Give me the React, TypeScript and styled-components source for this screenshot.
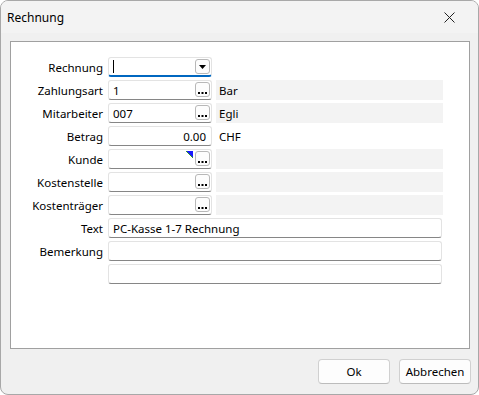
import { createGlobalStyle } from "styled-components";
import styled from "styled-components";

const GlobalStyle = createGlobalStyle`
  html, body {
    margin: 0;
    padding: 0;
    background: #ffffff;
  }
  body {
    font-family: "Noto Sans", "Open Sans", sans-serif;
    font-size: 11.5px;
    color: #000;
  }
`;

const Window = styled.div`
  box-sizing: border-box;
  width: 479px;
  height: 395px;
  border: 1px solid #a8a8a8;
  border-radius: 8px;
  background: #f0f0f0;
  display: flex;
  flex-direction: column;
  overflow: hidden;
`;

const TitleBar = styled.div`
  height: 32px;
  flex-shrink: 0;
  background: #f3f3f3;
  display: flex;
  align-items: center;
  justify-content: space-between;
  padding: 0 23px 0 6px;
  font-size: 12px;
`;

const CloseIcon = styled.svg`
  width: 11px;
  height: 11px;
`;

const Panel = styled.div`
  box-sizing: border-box;
  margin: 8px 8px 0 9px;
  height: 308px;
  background: #fff;
  border: 1px solid #a0a0a0;
  padding-top: 15px;
  display: flex;
  flex-direction: column;
  gap: 3px;
`;

const Row = styled.div`
  display: flex;
  align-items: center;
  height: 20px;
`;

const Label = styled.div`
  width: 92px;
  margin-right: 5px;
  text-align: right;
  white-space: nowrap;
`;

const Input = styled.div<{ $width: number; $focused?: boolean; $align?: string }>`
  box-sizing: border-box;
  position: relative;
  width: ${(p) => p.$width}px;
  height: 20px;
  border: 1px solid #e3e3e3;
  border-bottom: ${(p) => (p.$focused ? "2px solid #0067c0" : "1px solid #868686")};
  border-radius: 3px;
  background: #fff;
  display: flex;
  align-items: center;
  justify-content: ${(p) => (p.$align === "right" ? "flex-end" : "flex-start")};
  padding: 0 4px;
  white-space: nowrap;
`;

const FieldText = styled.span<{ $pad?: number }>`
  padding-right: ${(p) => p.$pad || 0}px;
`;

const Caret = styled.span`
  display: inline-block;
  width: 1px;
  height: 13px;
  background: #000;
`;

const SideButton = styled.div`
  box-sizing: border-box;
  position: absolute;
  right: 1px;
  top: 1px;
  width: 15px;
  height: 15px;
  border: 1px solid #b8b8b8;
  border-radius: 3px;
  background: #fdfdfd;
  display: flex;
  align-items: center;
  justify-content: center;
`;

const Info = styled.div<{ $shaded?: boolean }>`
  box-sizing: border-box;
  margin-left: 4px;
  width: 227px;
  height: 20px;
  background: ${(p) => (p.$shaded ? "#f3f3f3" : "transparent")};
  display: flex;
  align-items: center;
  padding-left: 3px;
`;

const Marker = styled.svg`
  position: absolute;
  right: 18px;
  top: 1px;
  width: 7px;
  height: 7px;
`;

const Footer = styled.div`
  flex: 1;
  display: flex;
  justify-content: flex-end;
  align-items: center;
  gap: 9px;
  padding-right: 7px;
`;

const Button = styled.button`
  box-sizing: border-box;
  width: 72px;
  height: 25px;
  border: 1px solid #d0d0d0;
  border-bottom-color: #bcbcbc;
  border-radius: 4px;
  background: #fdfdfd;
  font-family: inherit;
  font-size: 11.5px;
  color: #000;
  padding: 0;
`;

const Dots = () => (
  <svg width="11" height="11" viewBox="0 0 11 11">
    <rect x="1" y="8" width="2" height="2" fill="#000" />
    <rect x="4.5" y="8" width="2" height="2" fill="#000" />
    <rect x="8" y="8" width="2" height="2" fill="#000" />
  </svg>
);

const Arrow = () => (
  <svg width="9" height="6" viewBox="0 0 9 6">
    <path d="M1 1 L8 1 L4.5 5 Z" fill="#000" />
  </svg>
);

interface Lookup {
  label: string;
  value: string;
  info?: string;
  shaded?: boolean;
  marker?: boolean;
}

const lookups: Lookup[] = [
  { label: "Zahlungsart", value: "1", info: "Bar", shaded: true },
  { label: "Mitarbeiter", value: "007", info: "Egli", shaded: true },
];

const lower: Lookup[] = [
  { label: "Kunde", value: "", shaded: true, marker: true },
  { label: "Kostenstelle", value: "", shaded: true },
  { label: "Kostenträger", value: "", shaded: true },
];

function LookupRow({ item }: { item: Lookup }) {
  return (
    <Row>
      <Label>{item.label}</Label>
      <Input $width={104}>
        <FieldText>{item.value}</FieldText>
        {item.marker && (
          <Marker viewBox="0 0 7 7">
            <path d="M0 0 L7 0 L7 7 Z" fill="#1a1aff" />
            <path d="M0 0 L7 7" stroke="#2c9a2c" strokeWidth="1" />
          </Marker>
        )}
        <SideButton>
          <Dots />
        </SideButton>
      </Input>
      <Info $shaded={item.shaded}>{item.info}</Info>
    </Row>
  );
}

function App() {
  return (
    <>
      <GlobalStyle />
      <Window>
        <TitleBar>
          <span>Rechnung</span>
          <CloseIcon viewBox="0 0 11 11">
            <path d="M0.5 0.5 L10.5 10.5 M10.5 0.5 L0.5 10.5" stroke="#222" strokeWidth="1" />
          </CloseIcon>
        </TitleBar>
        <Panel>
          <Row>
            <Label>Rechnung</Label>
            <Input $width={104} $focused>
              <Caret />
              <SideButton>
                <Arrow />
              </SideButton>
            </Input>
          </Row>
          {lookups.map((l) => (
            <LookupRow key={l.label} item={l} />
          ))}
          <Row>
            <Label>Betrag</Label>
            <Input $width={104} $align="right">
              <FieldText $pad={1}>0.00</FieldText>
            </Input>
            <Info>CHF</Info>
          </Row>
          {lower.map((l) => (
            <LookupRow key={l.label} item={l} />
          ))}
          <Row>
            <Label>Text</Label>
            <Input $width={334}>PC-Kasse 1-7 Rechnung</Input>
          </Row>
          <Row>
            <Label>Bemerkung</Label>
            <Input $width={334} />
          </Row>
          <Row>
            <Label />
            <Input $width={334} />
          </Row>
        </Panel>
        <Footer>
          <Button>Ok</Button>
          <Button>Abbrechen</Button>
        </Footer>
      </Window>
    </>
  );
}

export default App;
